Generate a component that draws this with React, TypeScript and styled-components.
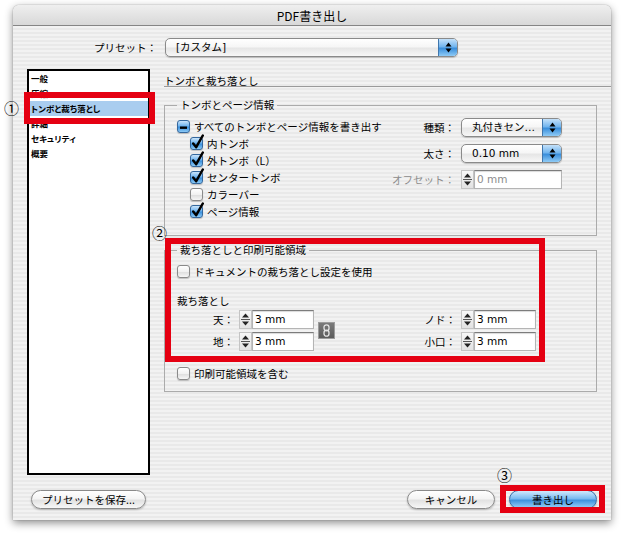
import React from 'react'
import styled, { createGlobalStyle } from 'styled-components'

const GlobalStyle = createGlobalStyle`
  html, body {
    margin: 0;
    padding: 0;
    background: #fff;
  }
  body {
    font-family: "Noto Sans CJK JP", "Noto Sans", sans-serif;
    font-size: 10.5px;
    font-weight: 400;
    color: #000;
  }
`

const Stage = styled.div`
  position: relative;
  width: 625px;
  height: 535px;
  padding: 5px 0 0 13px;
  box-sizing: border-box;
  overflow: hidden;
`

const Window = styled.div`
  width: 598px;
  height: 515px;
  display: flex;
  flex-direction: column;
  border-radius: 6px 6px 0 0;
  box-shadow: 0 3px 9px rgba(0, 0, 0, 0.45), 0 0 1px rgba(0, 0, 0, 0.6);
  overflow: hidden;
`

const TitleBar = styled.div`
  height: 21px;
  flex: none;
  box-sizing: border-box;
  display: flex;
  align-items: center;
  justify-content: center;
  font-size: 12px;
  background: linear-gradient(#efefef, #d8d8d8);
  border-bottom: 1px solid #858585;
`

const Body = styled.div`
  flex: 1;
  display: flex;
  flex-direction: column;
  background: repeating-linear-gradient(
    180deg,
    #f2f2f2 0,
    #f2f2f2 2px,
    #e9e9e9 2px,
    #e9e9e9 4px
  );
`

const PresetRow = styled.div`
  height: 43px;
  flex: none;
  display: flex;
  align-items: center;
`

const PresetLabel = styled.span`
  width: 144px;
  margin-right: 8px;
  text-align: right;
`

const Main = styled.div`
  height: 406px;
  flex: none;
  display: grid;
  grid-template-columns: 123px 1fr;
  column-gap: 14px;
  padding-left: 14px;
`

const List = styled.div`
  border: 2px solid #000;
  background: #fff;
`

const ListRow = styled.div<{ $selected?: boolean }>`
  height: 15px;
  line-height: 15px;
  padding-left: 2px;
  font-size: 8.5px;
  font-weight: 700;
  font-feature-settings: 'palt';
  white-space: nowrap;
  background: ${(p) => (p.$selected ? '#a9cdef' : 'transparent')};
`

const Panel = styled.div`
  display: flex;
  flex-direction: column;
`

const PanelTitle = styled.div`
  padding-top: 6px;
  line-height: 11px;
  border-bottom: 1px solid #9a9a9a;
`

const Group = styled.fieldset<{ $mt: number; $pad: string }>`
  margin: ${(p) => p.$mt}px 14px 0 0;
  padding: ${(p) => p.$pad};
  border: 1px solid #ababab;
  min-width: 0;
`

const Legend = styled.legend`
  padding: 0 3px;
  line-height: 14px;
`

const GroupRow = styled.div`
  display: flex;
  justify-content: space-between;
  align-items: flex-start;
`

const CheckList = styled.div`
  display: flex;
  flex-direction: column;
`

const CheckRow = styled.div<{ $indent?: number; $mt?: number }>`
  height: 17px;
  display: flex;
  align-items: center;
  gap: 4px;
  padding-left: ${(p) => p.$indent ?? 0}px;
  margin-top: ${(p) => p.$mt ?? 0}px;
`

const Box = styled.span<{ $on: boolean }>`
  position: relative;
  width: 13px;
  height: 13px;
  flex: none;
  box-sizing: border-box;
  border-radius: 3px;
  border: 1px solid ${(p) => (p.$on ? '#34679d' : '#8a8a8a')};
  background: ${(p) =>
    p.$on
      ? 'linear-gradient(#cbe5fb, #6fb3ee 45%, #3a8fdc 55%, #8ccaf6)'
      : 'linear-gradient(#ffffff, #f1f1f1 50%, #dedede 55%, #f6f6f6)'};
  box-shadow: 0 1px 1px rgba(0, 0, 0, 0.2);

  svg {
    position: absolute;
    left: 0;
    top: -4px;
    overflow: visible;
  }
`

const SettingsGrid = styled.div`
  display: grid;
  grid-template-columns: auto 101px;
  grid-auto-rows: 19px;
  column-gap: 6px;
  row-gap: 7px;
  align-items: center;
`

const FieldLabel = styled.span<{ $disabled?: boolean }>`
  text-align: right;
  white-space: nowrap;
  color: ${(p) => (p.$disabled ? '#8c8c8c' : '#000')};
`

const Popup = styled.div<{ $w: number }>`
  width: ${(p) => p.$w}px;
  height: 19px;
  box-sizing: border-box;
  display: flex;
  align-items: stretch;
  border: 1px solid #8a8a8a;
  border-radius: 5px;
  overflow: hidden;
  background: linear-gradient(#ffffff, #f6f6f6 45%, #e6e6e6 55%, #f7f7f7);
  box-shadow: 0 1px 1px rgba(0, 0, 0, 0.2);
`

const PopupText = styled.span`
  flex: 1;
  padding-left: 10px;
  line-height: 17px;
  white-space: nowrap;
  overflow: hidden;
  font-family: "DejaVu Sans", "Noto Sans CJK JP", sans-serif;
  font-size: 10.5px;
`

const PopupArrows = styled.span`
  width: 18px;
  flex: none;
  display: flex;
  align-items: center;
  justify-content: center;
  border-left: 1px solid #3f76ad;
  background: linear-gradient(#c4e1fa, #72b5ee 45%, #3a8edb 55%, #8fcbf6);
`

const SpinWrap = styled.div`
  height: 19px;
  display: flex;
`

const Stepper = styled.span`
  width: 13px;
  flex: none;
  display: flex;
  align-items: center;
  justify-content: center;
  box-sizing: border-box;
  border: 1px solid #c4c4c4;
  background: linear-gradient(#f7f7f7, #e2e2e2);
`

const TextField = styled.span<{ $disabled?: boolean }>`
  flex: 1;
  box-sizing: border-box;
  border: 1px solid #b4b4b4;
  border-top-color: #7c7c7c;
  background: #fff;
  box-shadow: inset 0 1px 1px rgba(0, 0, 0, 0.15);
  padding-left: 2px;
  line-height: 16px;
  font-family: "DejaVu Sans", "Noto Sans CJK JP", sans-serif;
  font-size: 10.5px;
  color: ${(p) => (p.$disabled ? '#8c8c8c' : '#000')};
`

const SubLabel = styled.div`
  height: 17px;
  line-height: 17px;
  margin-top: 12px;
`

const BleedGrid = styled.div`
  width: 359px;
  margin-top: 1px;
  display: grid;
  grid-template-columns: 62px 75px 21px 1fr 75px;
  grid-template-rows: 19px 19px;
  row-gap: 3px;
  align-items: center;
`

const BleedLabel = styled.span`
  text-align: right;
  padding-right: 5px;
`

const LinkButton = styled.span`
  grid-column: 3;
  grid-row: 1 / span 2;
  margin-left: 4px;
  width: 17px;
  height: 17px;
  box-sizing: border-box;
  border: 1px solid #9c9c9c;
  background: linear-gradient(#7a7a7a, #5c5c5c);
  display: flex;
  align-items: center;
  justify-content: center;
`

const Footer = styled.div`
  flex: 1;
  display: flex;
  align-items: flex-start;
  padding: 15px 14px 0 18px;
`

const Button = styled.button<{ $w: number; $default?: boolean }>`
  width: ${(p) => p.$w}px;
  height: 19px;
  padding: 0;
  margin: 0;
  border-radius: 10px;
  border: 1px solid ${(p) => (p.$default ? '#3a6ea6' : '#8a8a8a')};
  background: ${(p) =>
    p.$default
      ? 'linear-gradient(#d2e9fc, #79baf0 45%, #3f92dd 55%, #9ad2f8)'
      : 'linear-gradient(#ffffff, #f4f4f4 45%, #e2e2e2 55%, #f7f7f7)'};
  box-shadow: 0 1px 2px rgba(0, 0, 0, 0.25);
  font-family: "Noto Sans CJK JP", sans-serif;
  font-size: 10.5px;
  line-height: 17px;
  color: #000;
`

const Spacer = styled.div`
  flex: 1;
`

const ButtonGroup = styled.div`
  display: flex;
  gap: 14px;
`

const Mark = styled.div<{ $x: number; $y: number; $w: number; $h: number }>`
  position: absolute;
  left: ${(p) => p.$x}px;
  top: ${(p) => p.$y}px;
  width: ${(p) => p.$w}px;
  height: ${(p) => p.$h}px;
  box-sizing: border-box;
  border: 6px solid #e50012;
  pointer-events: none;
`

const Circled = styled.span<{ $x: number; $y: number }>`
  position: absolute;
  left: ${(p) => p.$x}px;
  top: ${(p) => p.$y}px;
  font-size: 15px;
  line-height: 15px;
`

const UpDown = () => (
  <svg width="7" height="11" viewBox="0 0 7 11">
    <path d="M0.5 4.5 L3.5 0.5 L6.5 4.5 Z" fill="#000" />
    <path d="M0.5 6.5 L3.5 10.5 L6.5 6.5 Z" fill="#000" />
  </svg>
)

const StepIcon = () => (
  <svg width="9" height="15" viewBox="0 0 9 15">
    <path d="M1 5.5 L4.5 1.5 L8 5.5 Z" fill="#222" />
    <line x1="0" y1="7.5" x2="9" y2="7.5" stroke="#555" strokeWidth="1" />
    <path d="M1 9.5 L4.5 13.5 L8 9.5 Z" fill="#222" />
  </svg>
)

type CheckState = 'on' | 'off' | 'mixed'

const Check: React.FC<{ state: CheckState }> = ({ state }) => (
  <Box $on={state !== 'off'}>
    {state === 'on' && (
      <svg width="14" height="16" viewBox="0 0 14 16">
        <path
          d="M2.2 9.5 L5.2 13.2 L11.8 1.5"
          fill="none"
          stroke="#000"
          strokeWidth="2.5"
          strokeLinecap="round"
          strokeLinejoin="round"
        />
      </svg>
    )}
    {state === 'mixed' && (
      <svg width="11" height="16" viewBox="0 0 11 16">
        <rect x="2" y="9.5" width="7" height="2.4" fill="#000" />
      </svg>
    )}
  </Box>
)

const Popdown: React.FC<{ width: number; value: string }> = ({ width, value }) => (
  <Popup $w={width}>
    <PopupText>{value}</PopupText>
    <PopupArrows>
      <UpDown />
    </PopupArrows>
  </Popup>
)

const SpinField: React.FC<{ value: string; disabled?: boolean }> = ({ value, disabled }) => (
  <SpinWrap>
    <Stepper>
      <StepIcon />
    </Stepper>
    <TextField $disabled={disabled}>{value}</TextField>
  </SpinWrap>
)

const sections = ['一般', '圧縮', 'トンボと裁ち落とし', '詳細', 'セキュリティ', '概要']

const markOptions: { label: string; state: CheckState }[] = [
  { label: '内トンボ', state: 'on' },
  { label: '外トンボ（L）', state: 'on' },
  { label: 'センタートンボ', state: 'on' },
  { label: 'カラーバー', state: 'off' },
  { label: 'ページ情報', state: 'on' },
]

export default function App() {
  return (
    <>
      <GlobalStyle />
      <Stage>
        <Window>
          <TitleBar>PDF書き出し</TitleBar>
          <Body>
            <PresetRow>
              <PresetLabel>プリセット：</PresetLabel>
              <Popdown width={293} value="[カスタム]" />
            </PresetRow>
            <Main>
              <List>
                {sections.map((s, i) => (
                  <ListRow key={s} $selected={i === 2}>
                    {s}
                  </ListRow>
                ))}
              </List>
              <Panel>
                <PanelTitle>トンボと裁ち落とし</PanelTitle>
                <Group $mt={11} $pad="6px 34px 15px 12px">
                  <Legend>トンボとページ情報</Legend>
                  <GroupRow>
                    <CheckList>
                      <CheckRow>
                        <Check state="mixed" />
                        すべてのトンボとページ情報を書き出す
                      </CheckRow>
                      {markOptions.map((m) => (
                        <CheckRow key={m.label} $indent={13}>
                          <Check state={m.state} />
                          {m.label}
                        </CheckRow>
                      ))}
                    </CheckList>
                    <SettingsGrid>
                      <FieldLabel>種類：</FieldLabel>
                      <Popdown width={101} value="丸付きセン…" />
                      <FieldLabel>太さ：</FieldLabel>
                      <Popdown width={101} value="0.10 mm" />
                      <FieldLabel $disabled>オフセット：</FieldLabel>
                      <SpinField value="0 mm" disabled />
                    </SettingsGrid>
                  </GroupRow>
                </Group>
                <Group $mt={7} $pad="6px 14px 9px 12px">
                  <Legend>裁ち落としと印刷可能領域</Legend>
                  <CheckRow>
                    <Check state="off" />
                    ドキュメントの裁ち落とし設定を使用
                  </CheckRow>
                  <SubLabel>裁ち落とし</SubLabel>
                  <BleedGrid>
                    <BleedLabel>天：</BleedLabel>
                    <SpinField value="3 mm" />
                    <LinkButton>
                      <svg width="9" height="13" viewBox="0 0 9 13">
                        <rect x="2" y="0.8" width="5" height="6" rx="2.5" fill="none" stroke="#e6e6e6" strokeWidth="1.3" />
                        <rect x="2" y="6.2" width="5" height="6" rx="2.5" fill="none" stroke="#e6e6e6" strokeWidth="1.3" />
                      </svg>
                    </LinkButton>
                    <BleedLabel>ノド：</BleedLabel>
                    <SpinField value="3 mm" />
                    <BleedLabel>地：</BleedLabel>
                    <SpinField value="3 mm" />
                    <BleedLabel>小口：</BleedLabel>
                    <SpinField value="3 mm" />
                  </BleedGrid>
                  <CheckRow $mt={14}>
                    <Check state="off" />
                    印刷可能領域を含む
                  </CheckRow>
                </Group>
              </Panel>
            </Main>
            <Footer>
              <Button $w={115}>プリセットを保存...</Button>
              <Spacer />
              <ButtonGroup>
                <Button $w={88}>キャンセル</Button>
                <Button $w={88} $default>
                  書き出し
                </Button>
              </ButtonGroup>
            </Footer>
          </Body>
        </Window>

        <Mark $x={24} $y={92} $w={131} $h={32} />
        <Mark $x={165} $y={238} $w={380} $h={124} />
        <Mark $x={500} $y={485} $w={105} $h={28} />
        <Circled $x={4} $y={100}>①</Circled>
        <Circled $x={152} $y={225}>②</Circled>
        <Circled $x={497} $y={467}>③</Circled>
      </Stage>
    </>
  )
}
